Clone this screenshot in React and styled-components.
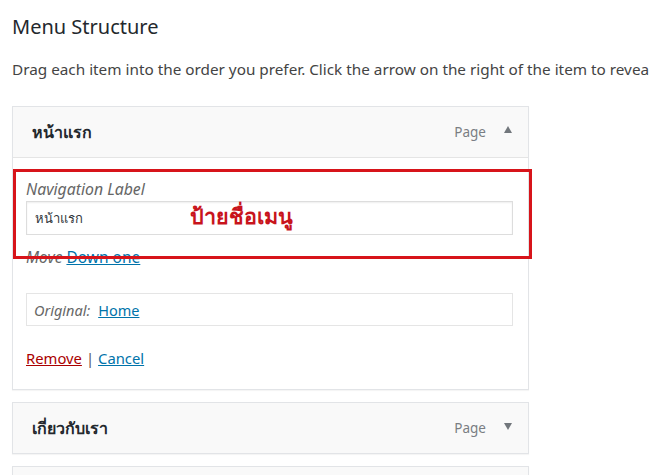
import React from 'react';
import styled, { createGlobalStyle } from 'styled-components';

const GlobalStyle = createGlobalStyle`
  body {
    margin: 0;
    background: #fff;
    font-family: "Noto Sans", "Open Sans", sans-serif;
    color: #23282d;
    overflow: hidden;
  }
`;

const Page = styled.div`
  width: 649px;
  height: 475px;
  padding: 14px 0 0 12px;
  box-sizing: border-box;
  overflow: hidden;
`;

const Title = styled.h2`
  margin: 0;
  font-size: 20px;
  font-weight: 400;
  line-height: 26px;
  color: #23282d;
`;

const Intro = styled.p`
  margin: 19px 0 0 0;
  font-size: 15.3px;
  line-height: 20px;
  color: #444;
  white-space: nowrap;
`;

const List = styled.div`
  margin-top: 27px;
  width: 517px;
  display: flex;
  flex-direction: column;
  gap: 12px;
`;

const Card = styled.div`
  position: relative;
  border: 1px solid #e2e4e7;
  background: #fff;
  box-shadow: 0 1px 1px rgba(0, 0, 0, 0.04);
`;

const Header = styled.div`
  height: 50px;
  display: flex;
  align-items: center;
  padding: 0 16px 0 19px;
  background: #f9f9f9;
  border-bottom: ${p => (p.open ? '1px solid #e5e5e5' : 'none')};
`;

const ItemTitle = styled.span`
  flex: 1;
  font-size: 16px;
  font-weight: 600;
  color: #23282d;
`;

const ItemType = styled.span`
  font-size: 13.5px;
  color: #7a7e83;
  margin-right: 18px;
`;

const Arrow = styled.span`
  width: 0;
  height: 0;
  border-left: 4px solid transparent;
  border-right: 4px solid transparent;
  ${p =>
    p.up
      ? 'border-bottom: 7px solid #72777c; margin-top: -6px;'
      : 'border-top: 7px solid #72777c; margin-top: -4px;'}
`;

const Settings = styled.div`
  padding: 21px 15px 21px 13px;
  display: flex;
  flex-direction: column;
`;

const FieldLabel = styled.label`
  font-size: 15.8px;
  font-style: italic;
  color: #666;
  line-height: 20px;
`;

const Field = styled.div`
  position: relative;
  margin-top: 2px;
  height: 32px;
  border: 1px solid #ddd;
  box-shadow: inset 0 1px 2px rgba(0, 0, 0, 0.07);
  display: flex;
  align-items: center;
  padding: 0 8px;
  font-size: 13px;
  color: #32373c;
`;

const Note = styled.span`
  position: absolute;
  left: 163px;
  top: -1px;
  line-height: 30px;
  font-size: 21.5px;
  font-weight: 600;
  color: #c8141c;
`;

const MoveRow = styled.div`
  margin-top: 12px;
  font-size: 15.5px;
  line-height: 20px;
  font-style: italic;
  color: #666;
  display: flex;
  gap: 4px;
`;

const Link = styled.a`
  color: ${p => (p.danger ? '#a00' : '#0073aa')};
  text-decoration: underline;
  font-style: normal;
  cursor: pointer;
`;

const Original = styled.div`
  margin-top: 26px;
  height: 31px;
  border: 1px solid #e5e5e5;
  display: flex;
  align-items: center;
  padding: 0 7px;
  gap: 8px;
  font-size: 14.5px;

  label {
    font-size: 14.5px;
  }
`;

const Actions = styled.div`
  margin-top: 22px;
  font-size: 14.8px;
  line-height: 20px;
  color: #555;
  display: flex;
  gap: 4px;
`;

const Highlight = styled.div`
  position: absolute;
  left: 0;
  top: 62px;
  width: 519px;
  height: 90px;
  border: 3px solid #d7141a;
  box-sizing: border-box;
  pointer-events: none;
`;

const MenuItem = ({ title, open, children }) => (
  <Card>
    <Header open={open}>
      <ItemTitle>{title}</ItemTitle>
      <ItemType>Page</ItemType>
      <Arrow up={open} />
    </Header>
    {open && children}
  </Card>
);

const App = () => (
  <Page>
    <GlobalStyle />
    <Title>Menu Structure</Title>
    <Intro>
      Drag each item into the order you prefer. Click the arrow on the right of the item to reveal additional configuration options.
    </Intro>
    <List>
      <MenuItem title='หน้าแรก' open>
        <Settings>
          <FieldLabel>Navigation Label</FieldLabel>
          <Field>
            หน้าแรก
            <Note>ป้ายชื่อเมนู</Note>
          </Field>
          <MoveRow>
            Move <Link>Down one</Link>
          </MoveRow>
          <Original>
            <FieldLabel>Original:</FieldLabel>
            <Link>Home</Link>
          </Original>
          <Actions>
            <Link danger>Remove</Link>|<Link>Cancel</Link>
          </Actions>
        </Settings>
        <Highlight />
      </MenuItem>
      <MenuItem title='เกี่ยวกับเรา' />
      <MenuItem title='ติดต่อเรา' />
    </List>
  </Page>
);

export default App;
